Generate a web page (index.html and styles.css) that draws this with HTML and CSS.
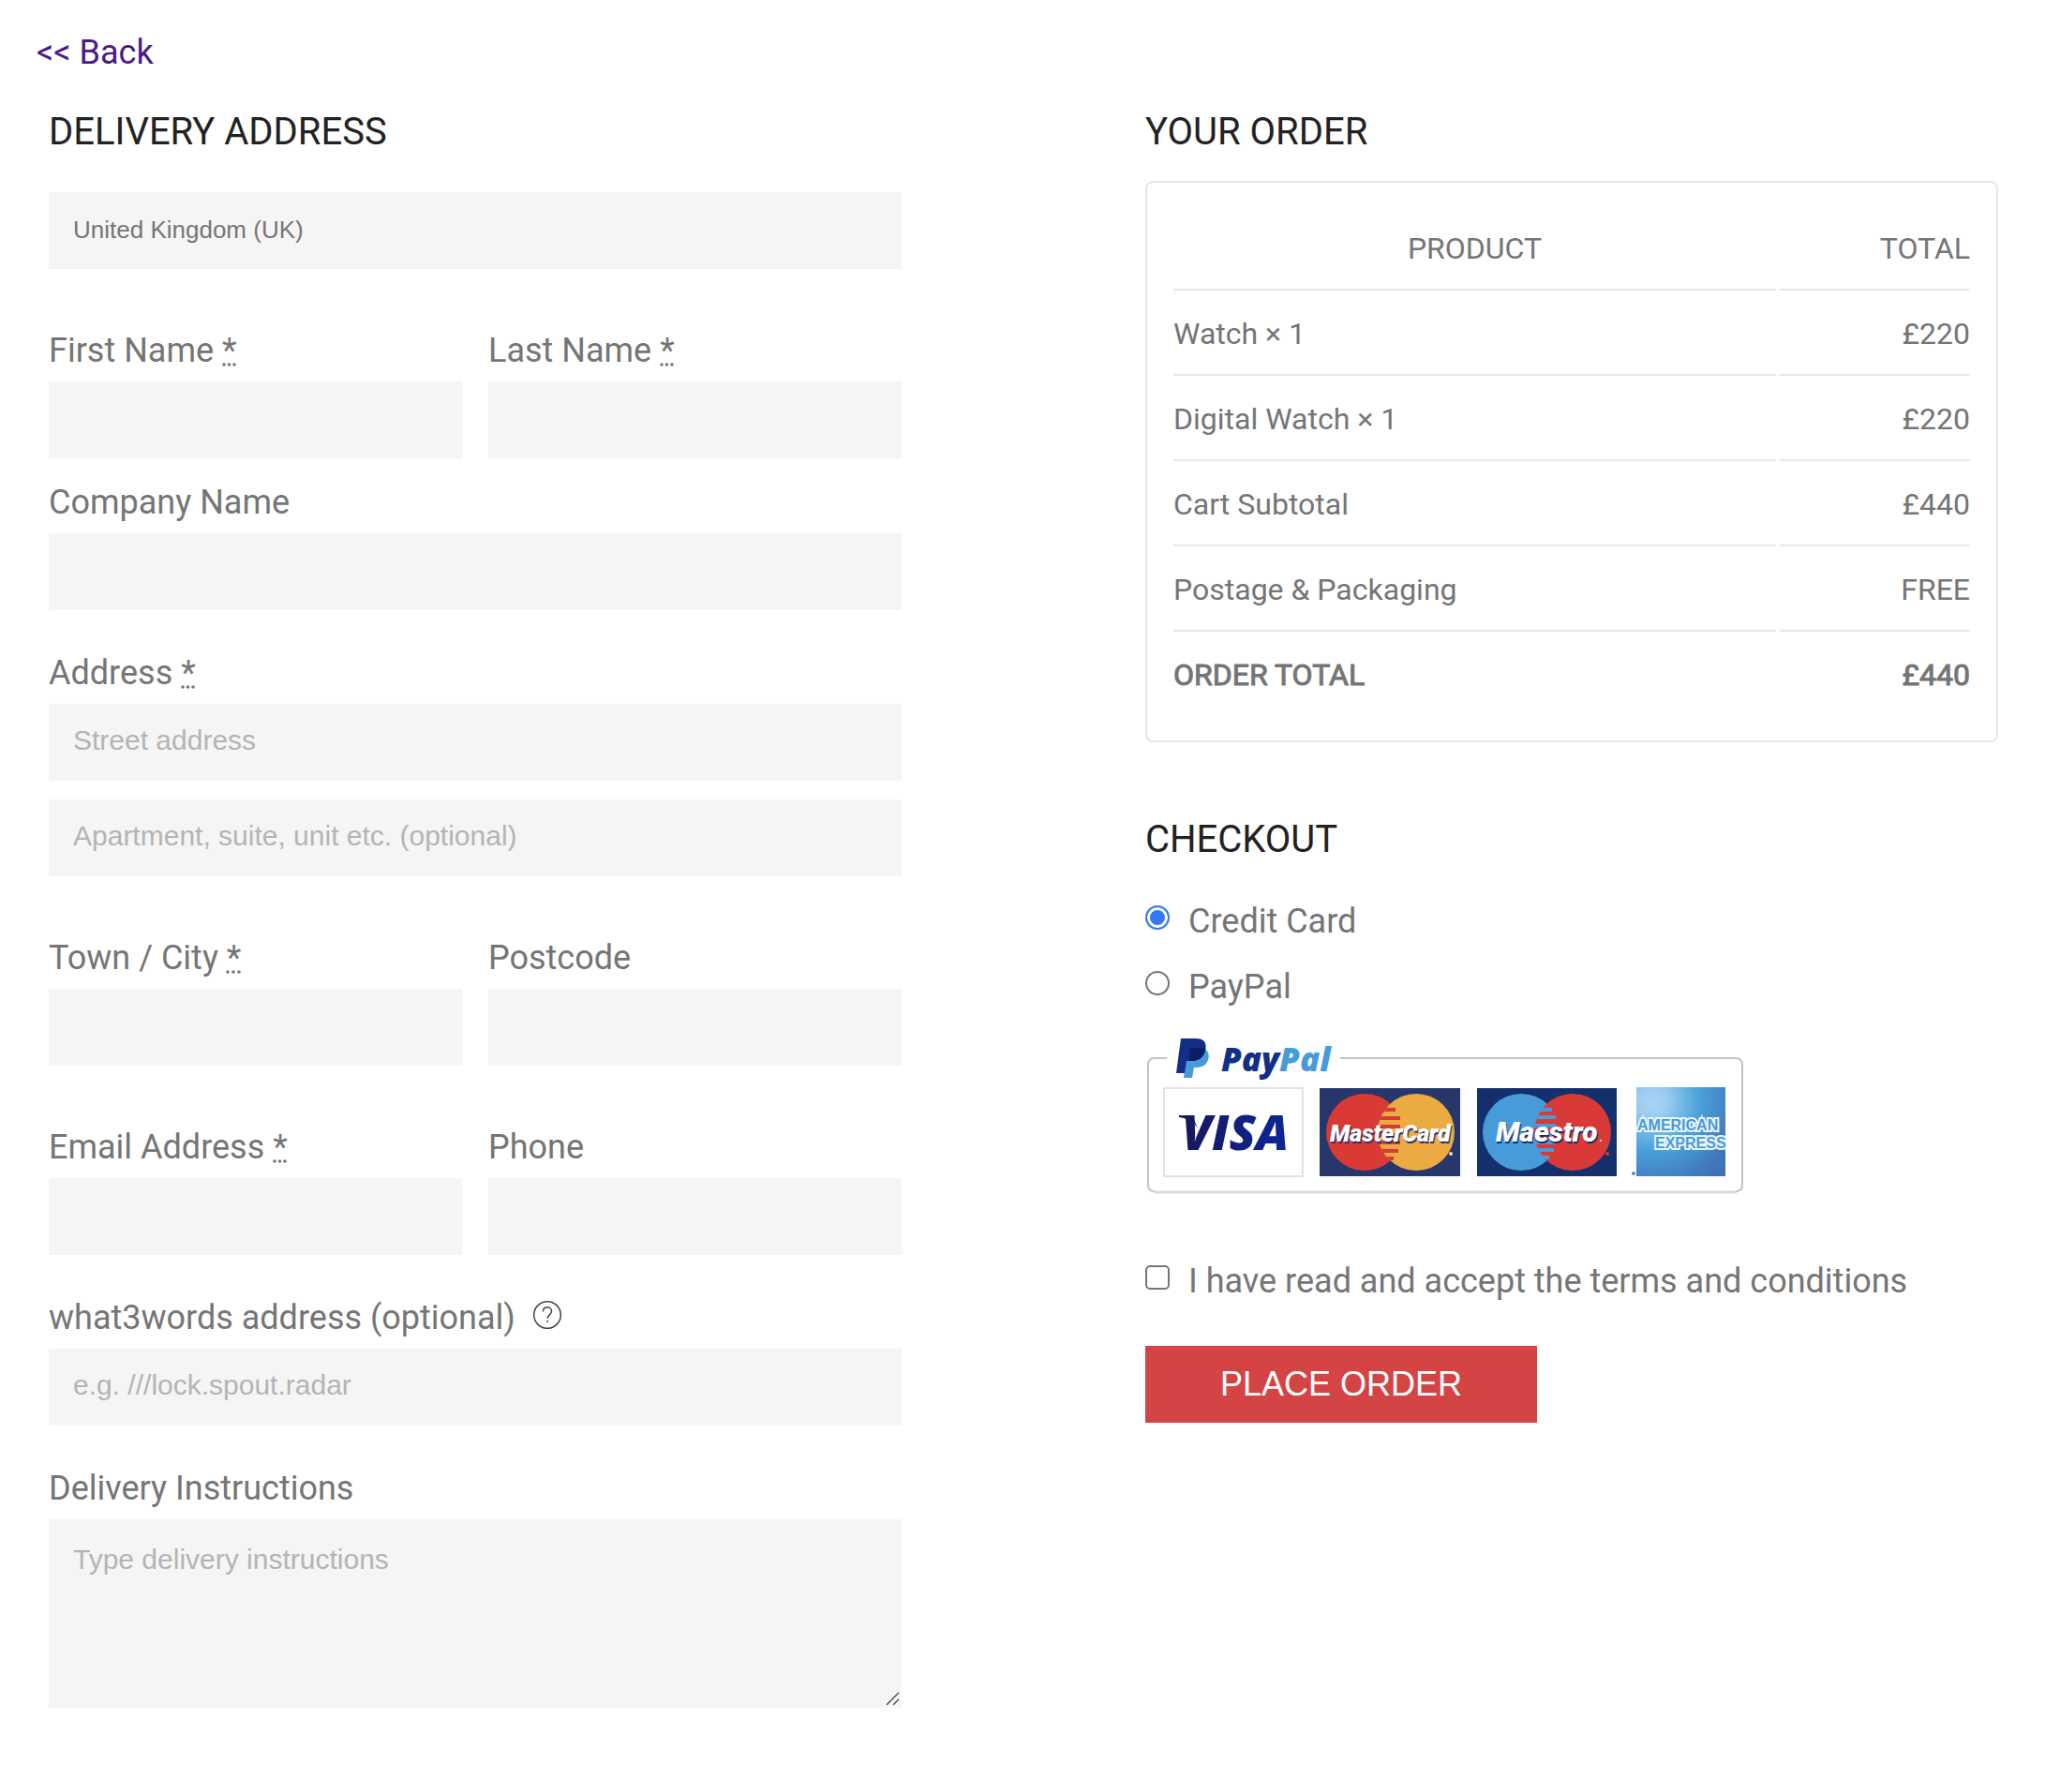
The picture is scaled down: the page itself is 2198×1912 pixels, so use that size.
FILE: index.html
```html
<!DOCTYPE html>
<html lang="en">
<head>
  <meta charset="UTF-8">
  <meta name="viewport" content="width=device-width, initial-scale=1.0">
  <title>Checkout</title>
  <link rel="stylesheet" href="styles.css">
</head>
<body>

  <nav class="top-nav">
    <a href="#">&lt;&lt; Back</a>
  </nav>

  <form class="checkout">

    <!-- Delivery address -->
    <section class="delivery">
      <h2>DELIVERY ADDRESS</h2>

      <select id="country" class="country" aria-label="Country">
        <option>United Kingdom (UK)</option>
      </select>

      <div class="row gap-large">
        <div class="field">
          <label for="firstName">First Name <abbr title="required">*</abbr></label>
          <input type="text" id="firstName">
        </div>
        <div class="field">
          <label for="lastName">Last Name <abbr title="required">*</abbr></label>
          <input type="text" id="lastName">
        </div>
      </div>

      <div class="field gap-small">
        <label for="company">Company Name</label>
        <input type="text" id="company">
      </div>

      <div class="field gap-medium">
        <label for="address1">Address <abbr title="required">*</abbr></label>
        <input type="text" id="address1" placeholder="Street address">
        <input type="text" id="address2" class="gap-small" placeholder="Apartment, suite, unit etc. (optional)" aria-label="Address line 2">
      </div>

      <div class="row gap-large">
        <div class="field">
          <label for="town">Town / City <abbr title="required">*</abbr></label>
          <input type="text" id="town">
        </div>
        <div class="field">
          <label for="postcode">Postcode</label>
          <input type="text" id="postcode">
        </div>
      </div>

      <div class="row gap-large">
        <div class="field">
          <label for="email">Email Address <abbr title="required">*</abbr></label>
          <input type="email" id="email">
        </div>
        <div class="field">
          <label for="phone">Phone</label>
          <input type="tel" id="phone">
        </div>
      </div>

      <div class="field gap-medium">
        <label for="w3w">what3words address (optional)
          <svg class="help" viewBox="0 0 32 32" role="img" aria-label="Help">
            <circle cx="17" cy="17" r="14.300" />
            <path d="M12.500 13.500c0-2.900 2-4.700 4.500-4.700s4.500 1.700 4.500 4.100c0 3.700-4.300 3.900-4.300 8.200" />
            <path d="M17.200 23v2" />
          </svg>
        </label>
        <input type="text" id="w3w" placeholder="e.g. ///lock.spout.radar">
      </div>

      <div class="field gap-medium">
        <label for="instructions">Delivery Instructions</label>
        <div class="textarea-wrap">
          <textarea id="instructions" placeholder="Type delivery instructions"></textarea>
          <svg class="grip" viewBox="0 0 16 16"><path d="M2 15L15 2M9 15l6-6" /></svg>
        </div>
      </div>
    </section>

    <!-- Order + payment -->
    <section class="order">
      <h2>YOUR ORDER</h2>

      <div class="order-box">
        <table>
          <thead>
            <tr><th>PRODUCT</th><th class="price">TOTAL</th></tr>
          </thead>
          <tbody>
            <tr><td>Watch × 1</td><td class="price">£220</td></tr>
            <tr><td>Digital Watch × 1</td><td class="price">£220</td></tr>
            <tr><td>Cart Subtotal</td><td class="price">£440</td></tr>
            <tr><td>Postage &amp; Packaging</td><td class="price">FREE</td></tr>
            <tr class="total"><td>ORDER TOTAL</td><td class="price">£440</td></tr>
          </tbody>
        </table>
      </div>

      <h2 class="checkout-title">CHECKOUT</h2>

      <div class="option">
        <input type="radio" name="payment" id="payCard" checked>
        <label for="payCard">Credit Card</label>
      </div>
      <div class="option">
        <input type="radio" name="payment" id="payPaypal">
        <label for="payPaypal">PayPal</label>
      </div>

      <svg class="cards" viewBox="0 0 640 180" role="img" aria-label="PayPal, Visa, MasterCard, Maestro, American Express">
        <defs>
          <linearGradient id="visaBlue" x1="0" x2="1">
            <stop offset="0" stop-color="#17185a" />
            <stop offset="1" stop-color="#0b279b" />
          </linearGradient>
          <radialGradient id="amexBlue" cx="0.18" cy="0.17" r="1.1">
            <stop offset="0" stop-color="#a9d4f4" />
            <stop offset="0.15" stop-color="#9bcdf0" />
            <stop offset="0.48" stop-color="#4ba2da" />
            <stop offset="0.85" stop-color="#4079bd" />
            <stop offset="1" stop-color="#3f70b4" />
          </radialGradient>
          <clipPath id="mcOverlap"><circle cx="289" cy="108" r="41" /></clipPath>
          <clipPath id="maOverlap"><circle cx="456" cy="108" r="41" /></clipPath>
        </defs>

        <!-- frame -->
        <path d="M23 29H10q-7 0-7 7v128q0 7 7 7M208 29h422q7 0 7 7v128q0 7-7 7" fill="none" stroke="#c3c3c3" stroke-width="2" />
        <path d="M9 172h622" stroke="#d9d9d9" stroke-width="3" />

        <!-- PayPal -->
        <path d="M45 18h16c6 2 8 7 6 13-2 6-7 8-13 8h-2l-2 11h-9z" fill="#469bdb" />
        <path d="M38 8h16c9 0 12 5 10 12-2 8-7 12-15 12h-5l-2 13h-9z" fill="#122f86" />
        <path d="M48 18h16.500c-1 9-6 14-15.500 14h-3z" fill="#0a1f63" />
        <text class="logo" x="81" y="43" font-size="35" fill="#122f86">Pay<tspan fill="#469bdb">Pal</tspan></text>

        <!-- Visa -->
        <rect x="20" y="61" width="148" height="94" fill="#fff" stroke="#e2e2e2" stroke-width="2" />
        <path d="M36 90h14l6 14q-6-10-20-12z" fill="#17185a" />
        <text class="logo" x="39" y="127" font-size="52" fill="url(#visaBlue)">VISA</text>

        <!-- MasterCard -->
        <rect x="186" y="61" width="150" height="94" fill="#27376b" />
        <circle cx="234" cy="108" r="41" fill="#d93a34" />
        <circle cx="289" cy="108" r="41" fill="#ecaa43" />
        <path d="M240 84h27M240 93h32M240 102h32M240 111h32M240 119h32M240 128h30M240 136h25" stroke="#d93a34" stroke-width="4" clip-path="url(#mcOverlap)" />
        <text class="logo-narrow" x="198" y="120" font-size="25" fill="#27376b">MasterCard</text>
        <text class="logo-narrow" x="197" y="118" font-size="25" fill="#fff">MasterCard</text>
        <circle cx="326" cy="131" r="2" fill="#dcdcdc" />

        <!-- Maestro -->
        <rect x="354" y="61" width="149" height="94" fill="#13306c" />
        <circle cx="401" cy="108" r="41" fill="#479bd9" />
        <circle cx="456" cy="108" r="41" fill="#d93a38" />
        <path d="M400 84h34M400 92h38M400 101h38M400 111h38M400 119h38M400 127h36M400 135h31" stroke="#479bd9" stroke-width="4" clip-path="url(#maOverlap)" />
        <text class="logo-narrow" x="375" y="120" font-size="30" fill="#13306c">Maestro</text>
        <text class="logo-narrow" x="374" y="118" font-size="30" fill="#fff">Maestro</text>
        <circle cx="486" cy="117" r="1" fill="#fff" />
        <circle cx="493" cy="131" r="2" fill="#d93a38" />

        <!-- American Express -->
        <rect x="524" y="60" width="95" height="95" fill="url(#amexBlue)" />
        <text class="amex" x="525" y="106">AMERICAN</text>
        <text class="amex" x="544" y="125">EXPRESS</text>
        <circle cx="521" cy="152" r="2" fill="#5b87c0" />
      </svg>

      <div class="option terms">
        <input type="checkbox" id="terms">
        <label for="terms">I have read and accept the terms and conditions</label>
      </div>

      <button type="submit" class="place-order">PLACE ORDER</button>
    </section>

  </form>

</body>
</html>
```
FILE: styles.css
```css
* {
  box-sizing: border-box;
}

body {
  margin: 0;
  background: #fff;
  color: #757575;
  font-family: Roboto, sans-serif;
  font-size: 36px;
  line-height: 54px;
}

.top-nav {
  padding: 29px 39px;
}

.top-nav a {
  color: #4c1a85;
  text-decoration: none;
}

.checkout {
  display: grid;
  grid-template-columns: 1fr 1fr;
  gap: 260px;
  padding: 0 66px 90px 52px;
}

h2 {
  margin: 0 0 23px;
  color: #222;
  font-size: 40px;
  font-weight: 400;
  line-height: 58px;
}

/* Form fields */
.row {
  display: grid;
  grid-template-columns: 1fr 1fr;
  gap: 28px;
}

.gap-small {
  margin-top: 20px;
}

.gap-medium {
  margin-top: 40px;
}

.gap-large {
  margin-top: 60px;
}

.field label {
  display: block;
  margin-bottom: 6px;
}

.field input,
.country,
textarea {
  display: block;
  width: 100%;
  height: 82px;
  padding: 0 26px 4px;
  border: 0;
  border-radius: 0;
  outline: none;
  background: #f5f5f5;
  color: #757575;
  font-family: "Liberation Sans", Arial, sans-serif;
  font-size: 30px;
}

.country {
  margin-top: 35px;
  padding-bottom: 2px;
  appearance: none;
  font-size: 26px;
}

::placeholder {
  color: #b4b4b4;
  font-weight: 300;
}

textarea {
  height: 201px;
  padding: 26px;
}

textarea::-webkit-resizer {
  display: none;
}

.textarea-wrap {
  position: relative;
}

.grip {
  position: absolute;
  right: 2px;
  bottom: 2px;
  width: 16px;
  height: 16px;
  fill: none;
  stroke: #555;
  stroke-width: 1.5;
  pointer-events: none;
}

.help {
  width: 32px;
  height: 32px;
  margin-left: 8px;
  fill: none;
  stroke: #444;
  stroke-width: 1.5;
}

/* Order table */
.order-box {
  padding: 24px 24px 23px;
  border: 2px solid #e6e6e6;
  border-radius: 8px;
}

table {
  width: 100%;
  border-spacing: 4px;
  font-size: 32px;
  line-height: 37px;
}

th,
td {
  padding: 24px 0;
  border-bottom: 2px solid #e6e6e6;
  font-weight: 400;
}

.price {
  width: 24%;
  text-align: right;
}

.total td {
  border-bottom: 0;
  -webkit-text-stroke: 1px #757575;
}

/* Payment */
.checkout-title {
  margin-top: 75px;
}

.option {
  display: flex;
  align-items: flex-start;
  gap: 20px;
  line-height: 70px;
}

.option input {
  flex: none;
  width: 26px;
  height: 26px;
  margin: 18px 0 0;
  border: 2px solid #767676;
  appearance: none;
}

.option input[type="radio"] {
  border-radius: 50%;
}

.option input[type="radio"]:checked {
  border-color: #3478f6;
  background: #3478f6;
  box-shadow: inset 0 0 0 3px #fff;
}

.option input[type="checkbox"] {
  border-radius: 5px;
}

.cards {
  display: block;
  width: 640px;
  max-width: 100%;
  margin-top: 12px;
}

.logo {
  font-family: "Open Sans", sans-serif;
  font-style: italic;
  font-weight: 800;
}

.logo-narrow {
  font-family: Roboto, sans-serif;
  font-style: italic;
  font-weight: 900;
}

.amex {
  fill: #4a9bd6;
  stroke: #e8f4fc;
  stroke-width: 4;
  paint-order: stroke;
  font-family: "Liberation Sans", Arial, sans-serif;
  font-size: 16px;
  font-weight: 700;
}

.terms {
  margin-top: 52px;
}

.place-order {
  margin-top: 34px;
  height: 82px;
  padding: 0 80px;
  border: 0;
  background: #d54444;
  color: #fff;
  font-family: "Liberation Sans", Arial, sans-serif;
  font-size: 36px;
  cursor: pointer;
}
```
